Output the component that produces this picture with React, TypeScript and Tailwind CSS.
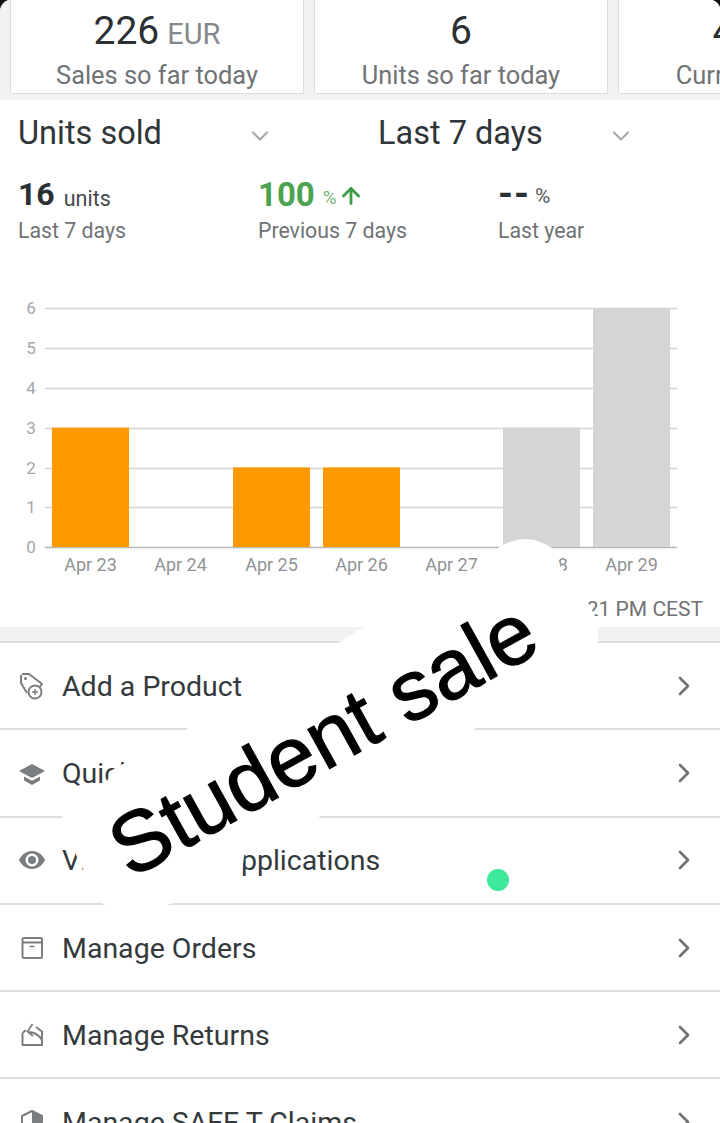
import type { ReactNode } from 'react'
import { ChevronDown, ChevronRight, ArrowUp } from 'lucide-react'

const gridRows = [
  { label: '6', y: 308 },
  { label: '5', y: 348 },
  { label: '4', y: 388 },
  { label: '3', y: 428 },
  { label: '2', y: 468 },
  { label: '1', y: 507 },
  { label: '0', y: 547 },
]

const bars = [
  { day: 'Apr 23', units: 3, x: 52, fill: '#ff9900' },
  { day: 'Apr 24', units: 0, x: 142, fill: '#ff9900' },
  { day: 'Apr 25', units: 2, x: 233, fill: '#ff9900' },
  { day: 'Apr 26', units: 2, x: 323, fill: '#ff9900' },
  { day: 'Apr 27', units: 0, x: 413, fill: '#ff9900' },
  { day: 'Apr 28', units: 3, x: 503, fill: '#d3d5d6' },
  { day: 'Apr 29', units: 6, x: 593, fill: '#d3d5d6' },
]

function Card({ value, unit, label }: { value: string; unit?: string; label: string }) {
  return (
    <div className="w-[294px] h-[94px] shrink-0 bg-white border border-[#dcdedf] border-t-0 flex flex-col items-center">
      <div className="h-[62px] flex items-center text-[#2b3033] text-[39px] leading-none">
        {value}
        {unit && <span className="text-[#84888a] text-[29px] ml-2 mt-1.5">{unit}</span>}
      </div>
      <p className="text-[#6f7375] text-[25.400px] leading-[26px]">{label}</p>
    </div>
  )
}

function Dropdown({ label, chevronGap }: { label: string; chevronGap: string }) {
  return (
    <div className="w-[360px] pl-[18px] relative flex items-center">
      <span className="text-[#2f3538] text-[32.500px] leading-none mt-0.5">{label}</span>
      <ChevronDown className={`${chevronGap} mt-2 text-[#a4a7a9]`} size={28} strokeWidth={1.8} />
    </div>
  )
}

function Stat({ label, children }: { label: string; children: ReactNode }) {
  return (
    <div className="w-[240px] pl-[18px]">
      <div className="h-[38px] flex items-center">{children}</div>
      <p className="text-[#6f7375] text-[21.300px] leading-[26px] mt-[5px]">{label}</p>
    </div>
  )
}

function UnitsChart() {
  return (
    <svg className="block mt-[11px]" width="720" height="335" viewBox="0 255 720 335">
      {gridRows.map((row) => (
        <g key={row.label}>
          <line
            x1="45"
            x2="677"
            y1={row.y + 0.5}
            y2={row.y + 0.5}
            stroke={row.label === '0' ? '#b4b6b7' : '#d2d4d5'}
            strokeWidth="1.5"
          />
          <text x="31" y={row.y + 6} textAnchor="middle" fontSize="17" fill="#a3a6a8">
            {row.label}
          </text>
        </g>
      ))}
      {bars.map((bar) => (
        <g key={bar.day}>
          {bar.units > 0 && (
            <rect x={bar.x} y={547 - bar.units * 39.8} width="77" height={bar.units * 39.8} fill={bar.fill} />
          )}
          <text x={bar.x + 38.5} y="571" textAnchor="middle" fontSize="18" fill="#8f9395">
            {bar.day}
          </text>
        </g>
      ))}
    </svg>
  )
}

const iconProps = {
  width: 30,
  height: 30,
  viewBox: '0 0 30 30',
  fill: 'none',
  stroke: '#7b7e80',
  strokeWidth: 2,
}

function TagPlusIcon() {
  return (
    <svg {...iconProps}>
      <path d="M5 3h7l13 10-3 4M10 22 4 12V4" strokeLinejoin="round" />
      <circle cx="8.500" cy="7.500" r="1.500" fill="#7b7e80" stroke="none" />
      <circle cx="18" cy="21" r="6.500" fill="#fff" />
      <path d="M18 18v6M15 21h6" strokeWidth="1.500" />
    </svg>
  )
}

function CapIcon() {
  return (
    <svg {...iconProps} stroke="none" fill="#7b7e80">
      <path d="M15 6 2 13l13 7 13-7z" />
      <path d="M7 18.500v4l8 4.500 8-4.500v-4l-8 4.200z" />
    </svg>
  )
}

function EyeIcon() {
  return (
    <svg {...iconProps} stroke="none" fill="#7b7e80">
      <path d="M15 6C8.500 6 4 10.500 2 15c2 4.500 6.500 9 13 9s11-4.500 13-9c-2-4.500-6.500-9-13-9z" />
      <circle cx="15" cy="15" r="6.500" fill="#fff" />
      <circle cx="15" cy="15" r="4" />
    </svg>
  )
}

function BoxIcon() {
  return (
    <svg {...iconProps}>
      <rect x="5.500" y="5" width="19.500" height="20" rx="1.500" />
      <path d="M5.500 9.500H25" />
      <path d="M12.500 13.500h5" strokeWidth="1.500" />
    </svg>
  )
}

function ReturnIcon() {
  return (
    <svg {...iconProps}>
      <path d="M5.500 13v12H25V11.500L19 7M5.500 13 9 10" strokeLinejoin="round" />
      <path d="M25 20c-3-5-8-8-14-8M15.500 4 10.500 11.500l5.500 4.500" strokeWidth="1.800" />
    </svg>
  )
}

function ClaimIcon() {
  return (
    <svg {...iconProps}>
      <path d="M5 9 15 4l10 5v14H5z" strokeLinejoin="round" />
      <path d="M15 4 25 9v14H15z" fill="#7b7e80" stroke="none" />
    </svg>
  )
}

const menuRows = [
  { label: 'Add a Product', icon: <TagPlusIcon /> },
  { label: 'Quick Start Guide', icon: <CapIcon /> },
  { label: 'View Selling Applications', icon: <EyeIcon /> },
  { label: 'Manage Orders', icon: <BoxIcon /> },
  { label: 'Manage Returns', icon: <ReturnIcon /> },
  { label: 'Manage SAFE T Claims', icon: <ClaimIcon /> },
]

// sticker pasted over the page: white patch, tilted caption and a green dot
function SaleSticker() {
  return (
    <>
      <svg className="absolute left-0 top-0" width="720" height="1123" viewBox="0 0 720 1123">
        <path
          d="M478 566 498 548Q525 530 552 548L560 566 585 596 598 622V645L475 729 322 816 245 850 240 885 170 904Q135 916 103 904L78 860 62 816 104 788 112 770 187 729 338 643 364 627 470 570Z"
          fill="#fff"
        />
        <path d="M0 0H8Q2 2 0 9ZM720 0H713Q718 2 720 7Z" fill="#111" />
      </svg>
      <span className="absolute left-[116px] top-[811px] origin-left -rotate-[29deg] font-['Liberation_Sans'] text-[85px] leading-none text-black whitespace-nowrap [-webkit-text-stroke:1.2px_black]">
        Student sale
      </span>
      <span className="absolute left-[487px] top-[869px] size-[22px] rounded-full bg-[#3ee89b]" />
    </>
  )
}

export default function App() {
  return (
    <div className="relative w-[720px] h-[1123px] overflow-hidden bg-white font-[Roboto,sans-serif]">
      <div className="h-[100px] bg-[#f1f2f2] flex gap-[10px] pl-[10px]">
        <Card value="226" unit="EUR" label="Sales so far today" />
        <Card value="6" label="Units so far today" />
        <Card value="40" unit="EUR" label="Current balance" />
      </div>

      <div className="flex h-[64px] items-center">
        <Dropdown label="Units sold" chevronGap="ml-[84px]" />
        <Dropdown label="Last 7 days" chevronGap="ml-[64px]" />
      </div>

      <div className="flex mt-[11px]">
        <Stat label="Last 7 days">
          <span className="text-[#2b3033] text-[32px] font-bold leading-none">16</span>
          <span className="text-[#44494c] text-[21.500px] ml-[9px] mt-2.5">units</span>
        </Stat>
        <Stat label="Previous 7 days">
          <span className="text-[#4ba34f] text-[33px] font-bold leading-none">100</span>
          <span className="text-[#6fb672] text-[19px] ml-2 mt-2">%</span>
          <ArrowUp className="text-[#3f9b46] mt-1 ml-px" size={26} strokeWidth={2.6} />
        </Stat>
        <Stat label="Last year">
          <span className="text-[#2b3033] text-[38px] tracking-[1px] font-bold leading-none">--</span>
          <span className="text-[#55595c] text-[21px] ml-[5px] mt-1.5">%</span>
        </Stat>
      </div>

      <UnitsChart />

      <p className="h-[37px] pr-[17px] text-right text-[#6f7375] text-[21px] leading-[38px]">1:21 PM CEST</p>

      <div className="h-[16px] bg-[#f1f2f2] border-b-2 border-[#dcdedf]" />

      {menuRows.map((row) => (
        <div key={row.label} className="h-[87.300px] flex items-center pl-[17px] pr-[20px] border-b-2 border-[#dcdedf]">
          {row.icon}
          <span className="ml-[15px] mt-[3px] text-[#34393c] text-[28.500px] leading-none">{row.label}</span>
          <ChevronRight className="ml-auto text-[#6f7375]" size={32} strokeWidth={2} />
        </div>
      ))}

      <SaleSticker />
    </div>
  )
}
